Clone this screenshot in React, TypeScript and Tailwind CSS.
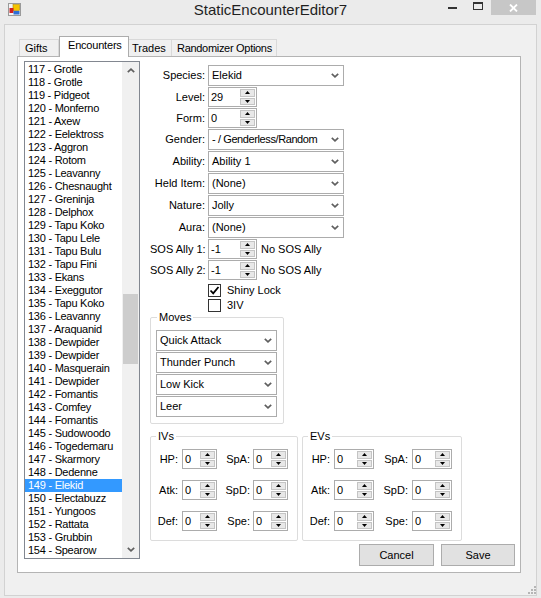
import React from 'react';

// Liste des rencontres affichées dans la ListBox
const ENTRIES = [
  '117 - Grotle', '118 - Grotle', '119 - Pidgeot', '120 - Monferno', '121 - Axew',
  '122 - Eelektross', '123 - Aggron', '124 - Rotom', '125 - Leavanny', '126 - Chesnaught',
  '127 - Greninja', '128 - Delphox', '129 - Tapu Koko', '130 - Tapu Lele', '131 - Tapu Bulu',
  '132 - Tapu Fini', '133 - Ekans', '134 - Exeggutor', '135 - Tapu Koko', '136 - Leavanny',
  '137 - Araquanid', '138 - Dewpider', '139 - Dewpider', '140 - Masquerain', '141 - Dewpider',
  '142 - Fomantis', '143 - Comfey', '144 - Fomantis', '145 - Sudowoodo', '146 - Togedemaru',
  '147 - Skarmory', '148 - Dedenne', '149 - Elekid', '150 - Electabuzz', '151 - Yungoos',
  '152 - Rattata', '153 - Grubbin', '154 - Spearow',
];

const Chevron = () => (
  <svg width="8" height="5" viewBox="0 0 8 5">
    <path d="M0.8 0.8 L4 3.8 L7.2 0.8" fill="none" stroke="#5f5f5f" strokeWidth="1.7" />
  </svg>
);

const Combo = ({ value, w, tight }: { value: string; w: string; tight?: boolean }) => (
  <div className={`h-[21px] border border-[#acacac] bg-white flex items-center pl-[3px] pr-[4px] ${w}`}>
    <span className={`flex-1 whitespace-nowrap ${tight ? 'tracking-[-0.4px]' : ''}`}>{value}</span>
    <Chevron />
  </div>
);

const Spin = () => (
  <div className="w-[15px] self-stretch flex flex-col py-[1px] mr-[1px] gap-[1px]">
    <div className="flex-1 bg-[#e8e8e8] border border-[#c4c4c4] flex items-center justify-center">
      <svg width="5" height="3" viewBox="0 0 5 3"><path d="M2.5 0 L5 3 L0 3 Z" fill="#000" /></svg>
    </div>
    <div className="flex-1 bg-[#e8e8e8] border border-[#c4c4c4] flex items-center justify-center">
      <svg width="5" height="3" viewBox="0 0 5 3"><path d="M0 0 L5 0 L2.5 3 Z" fill="#000" /></svg>
    </div>
  </div>
);

const NumBox = ({ value, w }: { value: string; w: string }) => (
  <div className={`h-[20px] border border-[#acacac] bg-white flex items-center pl-[2px] ${w}`}>
    <span className="flex-1">{value}</span>
    <Spin />
  </div>
);

const Check = ({ label, checked }: { label: string; checked?: boolean }) => (
  <div className="h-[13px] flex items-center gap-[6px]">
    <div className="w-[13px] h-[13px] border border-[#333] bg-white flex items-center justify-center">
      {checked && (
        <svg width="11" height="11" viewBox="0 0 11 11">
          <path d="M1.5 5.5 L4.2 8.3 L9.5 2" fill="none" stroke="#000" strokeWidth="1.8" />
        </svg>
      )}
    </div>
    <span className="leading-[13px]">{label}</span>
  </div>
);

type Stat = { l: string; r: string };
const STATS: Stat[] = [
  { l: 'HP:', r: 'SpA:' },
  { l: 'Atk:', r: 'SpD:' },
  { l: 'Def:', r: 'Spe:' },
];

const App = () => {
  return (
    <div className="w-[541px] h-[598px] bg-[#ebebeb] flex flex-col overflow-hidden font-['Liberation_Sans',Arial,sans-serif] text-[11px] text-black">
      {/* Barre de titre */}
      <div className="h-[24px] shrink-0 grid grid-cols-[1fr_auto_1fr]">
        <div className="pl-[8px] pt-[3px]">
          <svg width="13" height="13" viewBox="0 0 13 13">
            <rect x="0.5" y="0.5" width="12" height="12" fill="#f4f4f4" stroke="#9a9a9a" />
            <rect x="5" y="1.5" width="6.5" height="6" fill="#f5c400" stroke="#b08a00" strokeWidth="0.6" />
            <rect x="1.5" y="5" width="4" height="5" fill="#d42020" />
            <rect x="5.5" y="8" width="6" height="3.5" fill="#2f6fd6" />
          </svg>
        </div>
        <div className="text-[15px] leading-[18px] pt-[1px] text-[#1f1f1f] whitespace-nowrap">StaticEncounterEditor7</div>
        <div className="flex justify-end pr-[5px]">
          <div className="w-[26px] h-[15px] flex justify-center pt-[7px]">
            <div className="w-[9px] h-[2px] bg-[#333]" />
          </div>
          <div className="w-[26px] h-[15px] flex justify-center pt-[2px]">
            <div className="w-[10px] h-[8px] border border-t-2 border-[#333]" />
          </div>
          <div className="w-[45px] h-[15px] bg-[#c7c7c7] flex items-center justify-center">
            <svg width="9" height="8" viewBox="0 0 9 8">
              <path d="M1 0.5 L8 7.5 M8 0.5 L1 7.5" stroke="#fff" strokeWidth="1.8" />
            </svg>
          </div>
        </div>
      </div>

      {/* Zone cliente */}
      <div className="flex-1 mx-[4px] mb-[2px] border border-[#d2d2d2] bg-[#f0f0f0] flex flex-col pt-[11px] pl-[12px]">
        {/* Onglets */}
        <div className="h-[20px] flex items-end pl-[2px]">
          <div className="w-[40px] h-[17px] border border-b-0 border-[#d9d9d9] bg-[#f0f0f0] pl-[5px] leading-[16px]">Gifts</div>
          <div className="w-[70px] h-[21px] -mb-px relative z-10 border border-b-0 border-[#acacac] bg-white pl-[8px] leading-[17px] tracking-[-0.2px]">Encounters</div>
          <div className="w-[43px] h-[17px] border border-b-0 border-l-0 border-[#d9d9d9] bg-[#f0f0f0] pl-[3px] leading-[16px]">Trades</div>
          <div className="w-[105px] h-[17px] border border-b-0 border-l-0 border-[#d9d9d9] bg-[#f0f0f0] pl-[5px] leading-[16px] tracking-[-0.3px]">Randomizer Options</div>
        </div>

        {/* Page de l'onglet */}
        <div className="w-[504px] h-[517px] border border-[#b4b4b4] bg-white flex items-start pl-[6px] pt-[4px]">
          {/* ListBox */}
          <div className="w-[116px] h-[498px] border border-[#828790] flex">
            <div className="flex-1 pt-[1px] tracking-[-0.25px]">
              {ENTRIES.map((e) => (
                <div
                  key={e}
                  className={`h-[13px] leading-[13px] pl-[3px] whitespace-nowrap ${e === '149 - Elekid' ? 'bg-[#3399ff] text-white' : ''}`}
                >
                  {e}
                </div>
              ))}
            </div>
            <div className="w-[17px] bg-[#f0f0f0] flex flex-col">
              <div className="h-[17px] flex items-center justify-center">
                <svg width="8" height="5" viewBox="0 0 8 5">
                  <path d="M0.8 4.2 L4 1.2 L7.2 4.2" fill="none" stroke="#606060" strokeWidth="1.7" />
                </svg>
              </div>
              <div className="flex-1 pt-[215px]">
                <div className="h-[70px] mx-[1px] bg-[#cdcdcd]" />
              </div>
              <div className="h-[17px] flex items-center justify-center">
                <Chevron />
              </div>
            </div>
          </div>

          {/* Formulaire */}
          <div className="w-[369px] ml-[10px] mt-[4px] flex flex-col">
            <div className="grid grid-cols-[55px_auto] gap-x-[3px] gap-y-[1px] items-center">
              <div className="text-right">Species:</div>
              <Combo value="Elekid" w="w-[136px]" />
              <div className="text-right">Level:</div>
              <NumBox value="29" w="w-[49px]" />
              <div className="text-right">Form:</div>
              <NumBox value="0" w="w-[49px]" />
              <div className="text-right">Gender:</div>
              <Combo value="- / Genderless/Random" w="w-[136px]" tight />
              <div className="text-right">Ability:</div>
              <Combo value="Ability 1" w="w-[136px]" />
              <div className="text-right whitespace-nowrap">Held Item:</div>
              <Combo value="(None)" w="w-[136px]" />
              <div className="text-right">Nature:</div>
              <Combo value="Jolly" w="w-[136px]" />
              <div className="text-right">Aura:</div>
              <Combo value="(None)" w="w-[136px]" />
              <div className="text-right whitespace-nowrap">SOS Ally 1:</div>
              <div className="flex items-center gap-[4px]">
                <NumBox value="-1" w="w-[49px]" />
                <span>No SOS Ally</span>
              </div>
              <div className="text-right whitespace-nowrap">SOS Ally 2:</div>
              <div className="flex items-center gap-[4px]">
                <NumBox value="-1" w="w-[49px]" />
                <span>No SOS Ally</span>
              </div>
              <div className="col-start-2 mt-[3px]">
                <Check label="Shiny Lock" checked />
              </div>
              <div className="col-start-2 mt-[1px]">
                <Check label="3IV" />
              </div>
            </div>

            {/* Attaques */}
            <fieldset className="w-[134px] border border-[#dcdcdc] rounded-[2px]">
              <legend className="ml-[6px] px-[2px] leading-[10px]">Moves</legend>
              <div className="flex flex-col gap-[1px] pl-[5px] pt-[8px] pb-[6px]">
                <Combo value="Quick Attack" w="w-[121px]" />
                <Combo value="Thunder Punch" w="w-[121px]" />
                <Combo value="Low Kick" w="w-[121px]" />
                <Combo value="Leer" w="w-[121px]" />
              </div>
            </fieldset>

            {/* IVs / EVs */}
            <div className="flex items-start gap-[4px] mt-[7px]">
              <fieldset className="w-[148px] border border-[#dcdcdc] rounded-[2px]">
                <legend className="ml-[5px] px-[2px] leading-[10px]">IVs</legend>
                <div className="flex flex-col gap-[11px] pt-[8px] pb-[9px]">
                  {STATS.map((s) => (
                    <div key={s.l} className="h-[20px] flex items-center">
                      <div className="w-[31px] text-right pr-[4px]">{s.l}</div>
                      <NumBox value="0" w="w-[35px]" />
                      <div className="w-[36px] text-right pr-[3px]">{s.r}</div>
                      <NumBox value="0" w="w-[35px]" />
                    </div>
                  ))}
                </div>
              </fieldset>
              <fieldset className="w-[160px] border border-[#dcdcdc] rounded-[2px]">
                <legend className="ml-[5px] px-[2px] leading-[10px]">EVs</legend>
                <div className="flex flex-col gap-[11px] pt-[8px] pb-[9px]">
                  {STATS.map((s) => (
                    <div key={s.l} className="h-[20px] flex items-center">
                      <div className="w-[31px] text-right pr-[4px]">{s.l}</div>
                      <NumBox value="0" w="w-[40px]" />
                      <div className="w-[38px] text-right pr-[4px]">{s.r}</div>
                      <NumBox value="0" w="w-[40px]" />
                    </div>
                  ))}
                </div>
              </fieldset>
            </div>

            {/* Boutons */}
            <div className="flex justify-end gap-[7px] pr-[4px] mt-[3px]">
              <button className="w-[75px] h-[22px] bg-[#e1e1e1] border border-[#acacac]">Cancel</button>
              <button className="w-[74px] h-[22px] bg-[#e1e1e1] border border-[#acacac]">Save</button>
            </div>
          </div>
        </div>

        {/* Poignée de redimensionnement */}
        <div className="flex-1 flex items-end justify-end pb-[1px]">
          <svg width="9" height="9" viewBox="0 0 9 9">
            <rect x="7" y="1" width="2" height="2" fill="#b5b5b5" />
            <rect x="4" y="4" width="2" height="2" fill="#b5b5b5" />
            <rect x="7" y="4" width="2" height="2" fill="#b5b5b5" />
            <rect x="1" y="7" width="2" height="2" fill="#b5b5b5" />
            <rect x="4" y="7" width="2" height="2" fill="#b5b5b5" />
            <rect x="7" y="7" width="2" height="2" fill="#b5b5b5" />
          </svg>
        </div>
      </div>
    </div>
  );
};

export default App;
